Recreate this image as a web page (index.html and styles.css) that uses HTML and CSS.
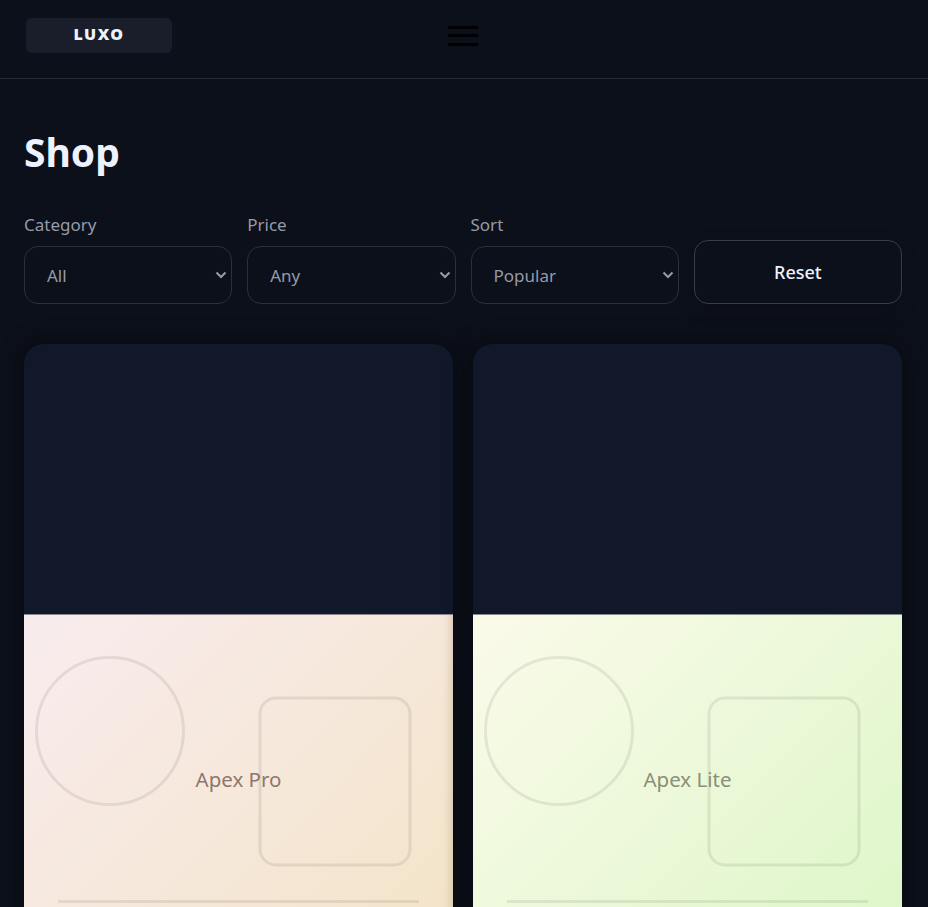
FILE: index.html
```html
<!DOCTYPE html>
<html lang="en">
<head>
    <meta charset="UTF-8">
    <title>Shop</title>
    <link rel="stylesheet" href="styles.css">
</head>
<body>
    <div class="header">
        <div class="logo">LUXO</div>
        <button class="menu-btn" aria-label="Menu"><span></span><span></span><span></span></button>
        <div class="header-spacer"></div>
    </div>

    <div class="main">
        <h1>Shop</h1>

        <div class="filters">
            <div class="filter">
                <label for="category">Category</label>
                <div class="select-wrap">
                    <select id="category"><option>All</option></select>
                    <svg class="chevron" viewBox="0 0 12 8"><path d="M1.5 1.5 6 6l4.5-4.5"/></svg>
                </div>
            </div>
            <div class="filter">
                <label for="price">Price</label>
                <div class="select-wrap">
                    <select id="price"><option>Any</option></select>
                    <svg class="chevron" viewBox="0 0 12 8"><path d="M1.5 1.5 6 6l4.5-4.5"/></svg>
                </div>
            </div>
            <div class="filter">
                <label for="sort">Sort</label>
                <div class="select-wrap">
                    <select id="sort"><option>Popular</option></select>
                    <svg class="chevron" viewBox="0 0 12 8"><path d="M1.5 1.5 6 6l4.5-4.5"/></svg>
                </div>
            </div>
            <button class="reset-btn">Reset</button>
        </div>

        <div class="products">
            <div class="product">
                <div class="product-top"></div>
                <div class="product-image image-pro">
                    <svg viewBox="0 0 429 322">
                        <circle cx="86" cy="116" r="73.5"/>
                        <rect x="236" y="83" width="150" height="167" rx="16"/>
                        <line x1="34" y1="286.5" x2="395" y2="286.5"/>
                    </svg>
                    <span class="product-name">Apex Pro</span>
                </div>
            </div>
            <div class="product">
                <div class="product-top"></div>
                <div class="product-image image-lite">
                    <svg viewBox="0 0 429 322">
                        <circle cx="86" cy="116" r="73.5"/>
                        <rect x="236" y="83" width="150" height="167" rx="16"/>
                        <line x1="34" y1="286.5" x2="395" y2="286.5"/>
                    </svg>
                    <span class="product-name">Apex Lite</span>
                </div>
            </div>
        </div>
    </div>
</body>
</html>
```

FILE: styles.css
```css
* {
    box-sizing: border-box;
    font-family: 'Noto Sans', 'Open Sans', sans-serif;
}

html, body {
    height: 100%;
    overflow: hidden;
}

body {
    margin: 0;
    background-color: #0c101a;
    color: #eef2ff;
}

.header {
    display: flex;
    justify-content: space-between;
    align-items: center;
    height: 79px;
    padding: 0 26px 8px;
    border-bottom: 1px solid #272b36;
}

.logo {
    width: 146px;
    height: 35px;
    border-radius: 6px;
    background-color: #1a1e2a;
    color: #eef2ff;
    font-size: 16px;
    font-weight: 900;
    letter-spacing: 1.4px;
    line-height: 33px;
    text-align: center;
}

.menu-btn {
    display: flex;
    flex-direction: column;
    justify-content: space-between;
    width: 30px;
    height: 20px;
    margin-top: 1px;
    padding: 0;
    border: none;
    background: none;
}

.menu-btn span {
    height: 3px;
    background-color: #000;
}

.header-spacer {
    width: 148px;
}

.main {
    padding: 0 26px 0 24px;
}

h1 {
    margin: 48px 0 35px;
    font-size: 39px;
    font-weight: 700;
    line-height: 50px;
}

.filters {
    display: grid;
    grid-template-columns: repeat(4, 1fr);
    gap: 15px;
    align-items: end;
    margin-bottom: 40px;
}

.filter label {
    display: block;
    margin-bottom: 9px;
    color: #959ba8;
    font-size: 17px;
    line-height: 25px;
}

.select-wrap {
    position: relative;
}

select {
    display: block;
    width: 100%;
    height: 58px;
    padding: 0 22px;
    border: 1px solid #2c303b;
    border-radius: 14px;
    background-color: #0c101a;
    color: #959ba8;
    font-size: 17px;
    appearance: none;
}

.chevron {
    position: absolute;
    top: 25px;
    right: 5px;
    width: 12px;
    height: 8px;
    fill: none;
    stroke: #959ba8;
    stroke-width: 2;
}

.reset-btn {
    height: 64px;
    border: 1px solid #393d47;
    border-radius: 14px;
    background-color: #0c101a;
    color: #eef2ff;
    font-size: 18px;
    font-weight: 500;
    box-shadow: 0 6px 20px rgba(0,0,0,0.12);
}

.products {
    display: grid;
    grid-template-columns: repeat(2, 1fr);
    gap: 20px;
}

.product {
    border-radius: 20px;
    overflow: hidden;
    box-shadow: 0 0 24px rgba(0,0,0,0.45);
}

.product-top {
    height: 270px;
    background-color: #11182a;
}

.product-image {
    position: relative;
    display: flex;
    justify-content: center;
    align-items: center;
    height: 329px;
    border-top: 1px solid #8a8790;
}

.product-image svg {
    position: absolute;
    top: 0;
    left: 0;
    width: 100%;
    fill: none;
    stroke: rgba(0,0,0,0.08);
    stroke-width: 3;
}

.image-pro {
    background: linear-gradient(135deg, #f9ecee, #f3e4c8);
    box-shadow: inset -10px 0 8px -8px rgba(120,90,60,0.25);
}

.image-lite {
    background: linear-gradient(135deg, #fbfbea, #ddf6c8);
    border-top-color: #878a85;
}

.product-name {
    position: relative;
    font-size: 20.5px;
}

.image-pro .product-name {
    color: #8e7670;
}

.image-lite .product-name {
    color: #8a8f78;
}
```
